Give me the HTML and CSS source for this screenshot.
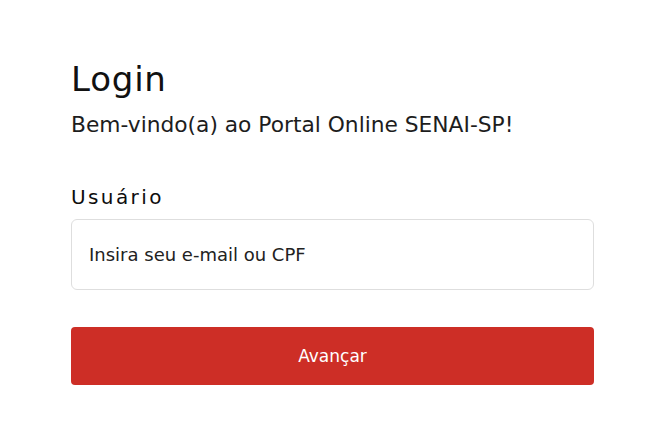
FILE: index.html
```html
<!DOCTYPE html>
<html lang="pt-BR">
<head>
<meta charset="utf-8">
<title>Login</title>
<link rel="stylesheet" href="styles.css">
</head>
<body>
<main class="login">
  <h1 class="login-title">Login</h1>
  <p class="login-subtitle">Bem-vindo(a) ao Portal Online SENAI-SP!</p>
  <form class="login-form">
    <label class="field-label" for="usuario">Usuário</label>
    <input class="field-input" id="usuario" type="text" placeholder="Insira seu e-mail ou CPF">
    <button class="btn-primary" type="button">Avançar</button>
  </form>
</main>
</body>
</html>
```
FILE: styles.css
```css
html, body {
  margin: 0;
  padding: 0;
  background: #ffffff;
}
body {
  font-family: "DejaVu Sans", "Open Sans", sans-serif;
  color: #1b1b1b;
}
.login {
  width: 523px;
  padding: 59px 0 0 71px;
}
.login-title {
  margin: 0;
  font-size: 34px;
  line-height: 40px;
  font-weight: 400;
  letter-spacing: 0.8px;
  color: #111111;
}
.login-subtitle {
  margin: 12px 0 0;
  font-size: 21.75px;
  line-height: 28px;
  color: #1d1d1d;
}
.login-form {
  display: flex;
  flex-direction: column;
  margin-top: 45px;
}
.field-label {
  font-size: 20px;
  line-height: 26px;
  font-weight: 400;
  letter-spacing: 2.4px;
  color: #0d0d0d;
}
.field-input {
  box-sizing: border-box;
  margin-top: 9px;
  height: 71px;
  width: 100%;
  padding: 0 17px;
  border: 1px solid #dedede;
  border-radius: 6px;
  font-family: inherit;
  font-size: 18px;
  color: #222222;
  background: #ffffff;
  outline: none;
}
.field-input::placeholder {
  color: #222222;
  opacity: 1;
}
.btn-primary {
  margin-top: 37px;
  height: 58px;
  width: 100%;
  border: none;
  border-radius: 4px;
  background: #cd2e26;
  color: #ffffff;
  font-family: inherit;
  font-size: 17px;
  cursor: pointer;
}
```
